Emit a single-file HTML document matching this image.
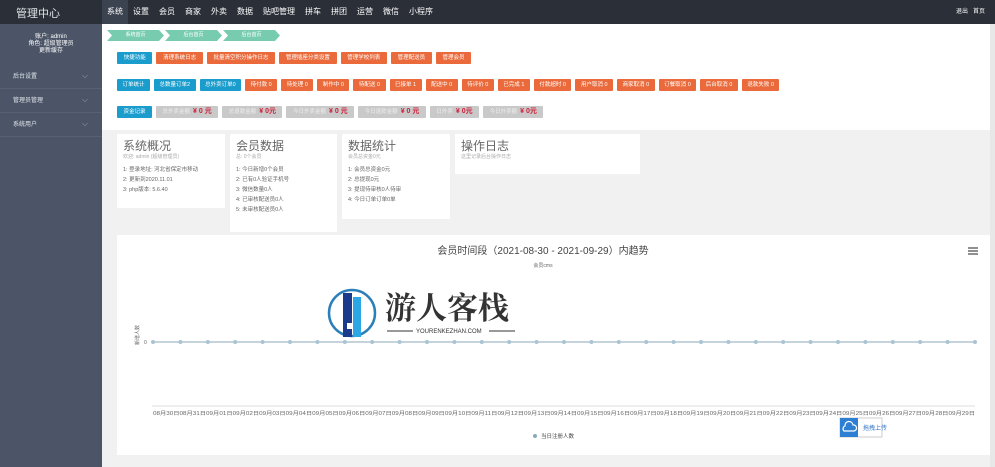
<!DOCTYPE html>
<html><head><meta charset="utf-8"><style>
*{margin:0;padding:0;box-sizing:border-box}
body{width:995px;height:467px;overflow:hidden;font-family:"Liberation Sans","Noto Sans CJK SC",sans-serif;background:#fff;position:relative;font-size:7px}
.top{position:absolute;left:0;top:0;width:995px;height:24px;background:#2a2f38}
.logo{position:absolute;left:16px;top:5px;color:#dfe3e8;font-size:11px}
.nav{position:absolute;left:102px;top:0;height:24px;display:flex}
.nav span{color:#fff;font-size:8px;line-height:24px;padding:0 5px}
.nav span.on{background:#3b4350}
.tr{position:absolute;right:10px;top:0;line-height:24px;color:#fff;font-size:6px}
.side{position:absolute;left:0;top:24px;width:102px;height:443px;background:#4b5567}
.user{text-align:center;color:#fff;font-size:6px;line-height:7px;margin-top:10px}
.mi{color:#e5e8ee;font-size:6px;height:24px;line-height:24px;padding-left:13px;border-bottom:1px solid #566173;position:relative}
.mi:after{content:"⌵";position:absolute;right:14px;top:-1px;color:#9aa4b2;font-size:8px}
.bc{position:absolute;left:107px;top:30px;display:flex}
.bc div{width:57px;text-align:center;height:11px;line-height:11px;color:#fff;font-size:5px;background:#77ccb0;margin-right:1px;clip-path:polygon(0 0,calc(100% - 5px) 0,100% 50%,calc(100% - 5px) 100%,0 100%,5px 50%)}
.row{position:absolute;left:117px;display:flex}
.row span{height:12px;line-height:12px;color:#fff;font-size:5.5px;padding:0 5.5px;margin-right:4px;border-radius:1px;background:#ea6a3c;white-space:nowrap}
.r1 span{padding:0 6.7px}
.r3 span{padding:0 6.5px}
.row span.b{background:#1a9ccc}
.row span.g{background:#c9c9c9;color:#eee}
.row span.g b{color:#d0213a;font-size:7px;margin-left:3px}
.gray{position:absolute;left:102px;top:130px;width:888px;height:337px;background:#f1f1f1}
.card{position:absolute;top:134px;background:#fff;padding:5px 6px;color:#777}
.card h3{font-weight:normal;font-size:12px;color:#666;line-height:14px}
.card .s{color:#aaa;font-size:5px;margin-bottom:5px}
.card p{font-size:5.5px;line-height:10px;color:#666}
.chart{position:absolute;left:117px;top:235px;width:873px;height:220px;background:#fff}
.sb{position:absolute;left:990px;top:24px;width:5px;height:443px;background:#e8e8e8}
</style></head><body>
<div class="top"><div class="logo">管理中心</div>
<div class="nav"><span class="on">系统</span><span>设置</span><span>会员</span><span>商家</span><span>外卖</span><span>数据</span><span>贴吧管理</span><span>拼车</span><span>拼团</span><span>运营</span><span>微信</span><span>小程序</span></div>
<div class="tr">退出 &nbsp; 首页</div></div>
<div class="side"><div class="user">账户: admin<br>角色: 超级管理员<br>更新缓存</div>
<div style="height:10px"></div>
<div class="mi">后台设置</div><div class="mi">管理员管理</div><div class="mi">系统用户</div></div>
<div class="bc"><div>系统首页</div><div>后台首页</div><div>后台首页</div></div>
<div class="row r1" style="top:52px"><span class="b">快捷功能</span><span>清理系统日志</span><span>批量清空积分操作日志</span><span>管理插座分类设置</span><span>管理学校列表</span><span>管理配送员</span><span>管理会员</span></div>
<div class="row" style="top:79px"><span class="b">订单统计</span><span class="b">总数量订单2</span><span class="b">总外卖订单0</span><span>待付款 0</span><span>待处理 0</span><span>制作中 0</span><span>待配送 0</span><span>已接单 1</span><span>配送中 0</span><span>待评价 0</span><span>已完成 1</span><span>付款超时 0</span><span>用户取消 0</span><span>商家取消 0</span><span>订餐取消 0</span><span>后台取消 0</span><span>退款失败 0</span></div>
<div class="row r3" style="top:106px"><span class="b">资金记录</span><span class="g">总外卖金额<b>¥ 0 元</b></span><span class="g">总退款金额<b>¥ 0元</b></span><span class="g">今日外卖金额<b>¥ 0 元</b></span><span class="g">今日退款金额<b>¥ 0 元</b></span><span class="g">日外卖<b>¥ 0元</b></span><span class="g">今日外卖额<b>¥ 0元</b></span></div>
<div class="gray"></div>
<div class="card" style="left:117px;width:108px;height:74px"><h3>系统概况</h3><div class="s">欢迎: admin (超级管理员)</div><p>1: 登录地址: 河北省保定市移动</p><p>2: 更新到2020.11.01</p><p>3: php版本: 5.6.40</p></div>
<div class="card" style="left:230px;width:107px;height:98px"><h3>会员数据</h3><div class="s">总: 0个会员</div><p>1: 今日新增0个会员</p><p>2: 已有0人验证手机号</p><p>3: 微信数量0人</p><p>4: 已审核配送员0人</p><p>5: 未审核配送员0人</p></div>
<div class="card" style="left:342px;width:108px;height:85px"><h3>数据统计</h3><div class="s">会员总资金0元</div><p>1: 会员总资金0元</p><p>2: 总提现0元</p><p>3: 提现待审核0人待审</p><p>4: 今日订单订单0单</p></div>
<div class="card" style="left:455px;width:185px;height:40px"><h3>操作日志</h3><div class="s">这里记录后台操作日志</div></div>
<div class="chart"><svg width="873" height="220" font-family="Liberation Sans, Noto Sans CJK SC, sans-serif">
<text x="426" y="19" font-size="10" fill="#444" text-anchor="middle">会员时间段（2021-08-30 - 2021-09-29）内趋势</text>
<text x="426" y="32" font-size="5" fill="#666" text-anchor="middle">会员cms</text>
<g stroke="#555" stroke-width="1.3"><line x1="851" y1="13" x2="861" y2="13"/><line x1="851" y1="16" x2="861" y2="16"/><line x1="851" y1="19" x2="861" y2="19"/></g>
<text x="17" y="115" font-size="5" fill="#666" transform="rotate(-90 17 110)">新增人数</text>
<text x="27" y="109" font-size="5" fill="#666">0</text>
<line x1="35" y1="107" x2="858" y2="107" stroke="#8aa7b9" stroke-width="1"/>
<line x1="35" y1="171" x2="858" y2="171" stroke="#ddd"/>
<g fill="#a9c4d2" id="d"></g>
<circle cx="235" cy="78" r="23" fill="#fff" stroke="#2a7fb8" stroke-width="2.5"/>
<rect x="226" y="58" width="9" height="44" fill="#1c3a8c"/><rect x="236" y="62" width="8" height="40" fill="#2ba7e5"/><rect x="230" y="88" width="6" height="6" fill="#fff"/>
<text x="268" y="84" font-size="31" font-weight="bold" fill="#333" font-family="Noto Serif CJK SC, serif">游人客栈</text>
<line x1="270" y1="96" x2="296" y2="96" stroke="#333"/><text x="299" y="98" font-size="6" fill="#333">YOURENKEZHAN.COM</text><line x1="372" y1="96" x2="398" y2="96" stroke="#333"/>
<text x="36" y="180" font-size="5" fill="#666" textLength="822" lengthAdjust="spacingAndGlyphs">08月30日08月31日09月01日09月02日09月03日09月04日09月05日09月06日09月07日09月08日09月09日09月10日09月11日09月12日09月13日09月14日09月15日09月16日09月17日09月18日09月19日09月20日09月21日09月22日09月23日09月24日09月25日09月26日09月27日09月28日09月29日</text>
<circle cx="418" cy="201" r="2" fill="#8ab"/><text x="424" y="203" font-size="5.5" fill="#444">当日注册人数</text>
<rect x="723" y="183" width="42" height="19" fill="#fff" stroke="#ccc"/><rect x="723" y="183" width="18" height="19" fill="#2d7fd3"/>
<path d="M727 196h10a3 3 0 0 0-1-6a4 4 0 0 0-8 1a3 3 0 0 0-1 5z" fill="none" stroke="#fff" stroke-width="1.2"/>
<text x="746" y="195" font-size="6" fill="#2d6fc3">拖拽上传</text>
</svg></div>
<div class="sb"></div>
<script>
var g=document.getElementById('d'),h='';for(var i=0;i<31;i++){h+='<circle cx="'+(36+i*27.4)+'" cy="107" r="2"/>';}g.innerHTML=h;
</script>
</body></html>
